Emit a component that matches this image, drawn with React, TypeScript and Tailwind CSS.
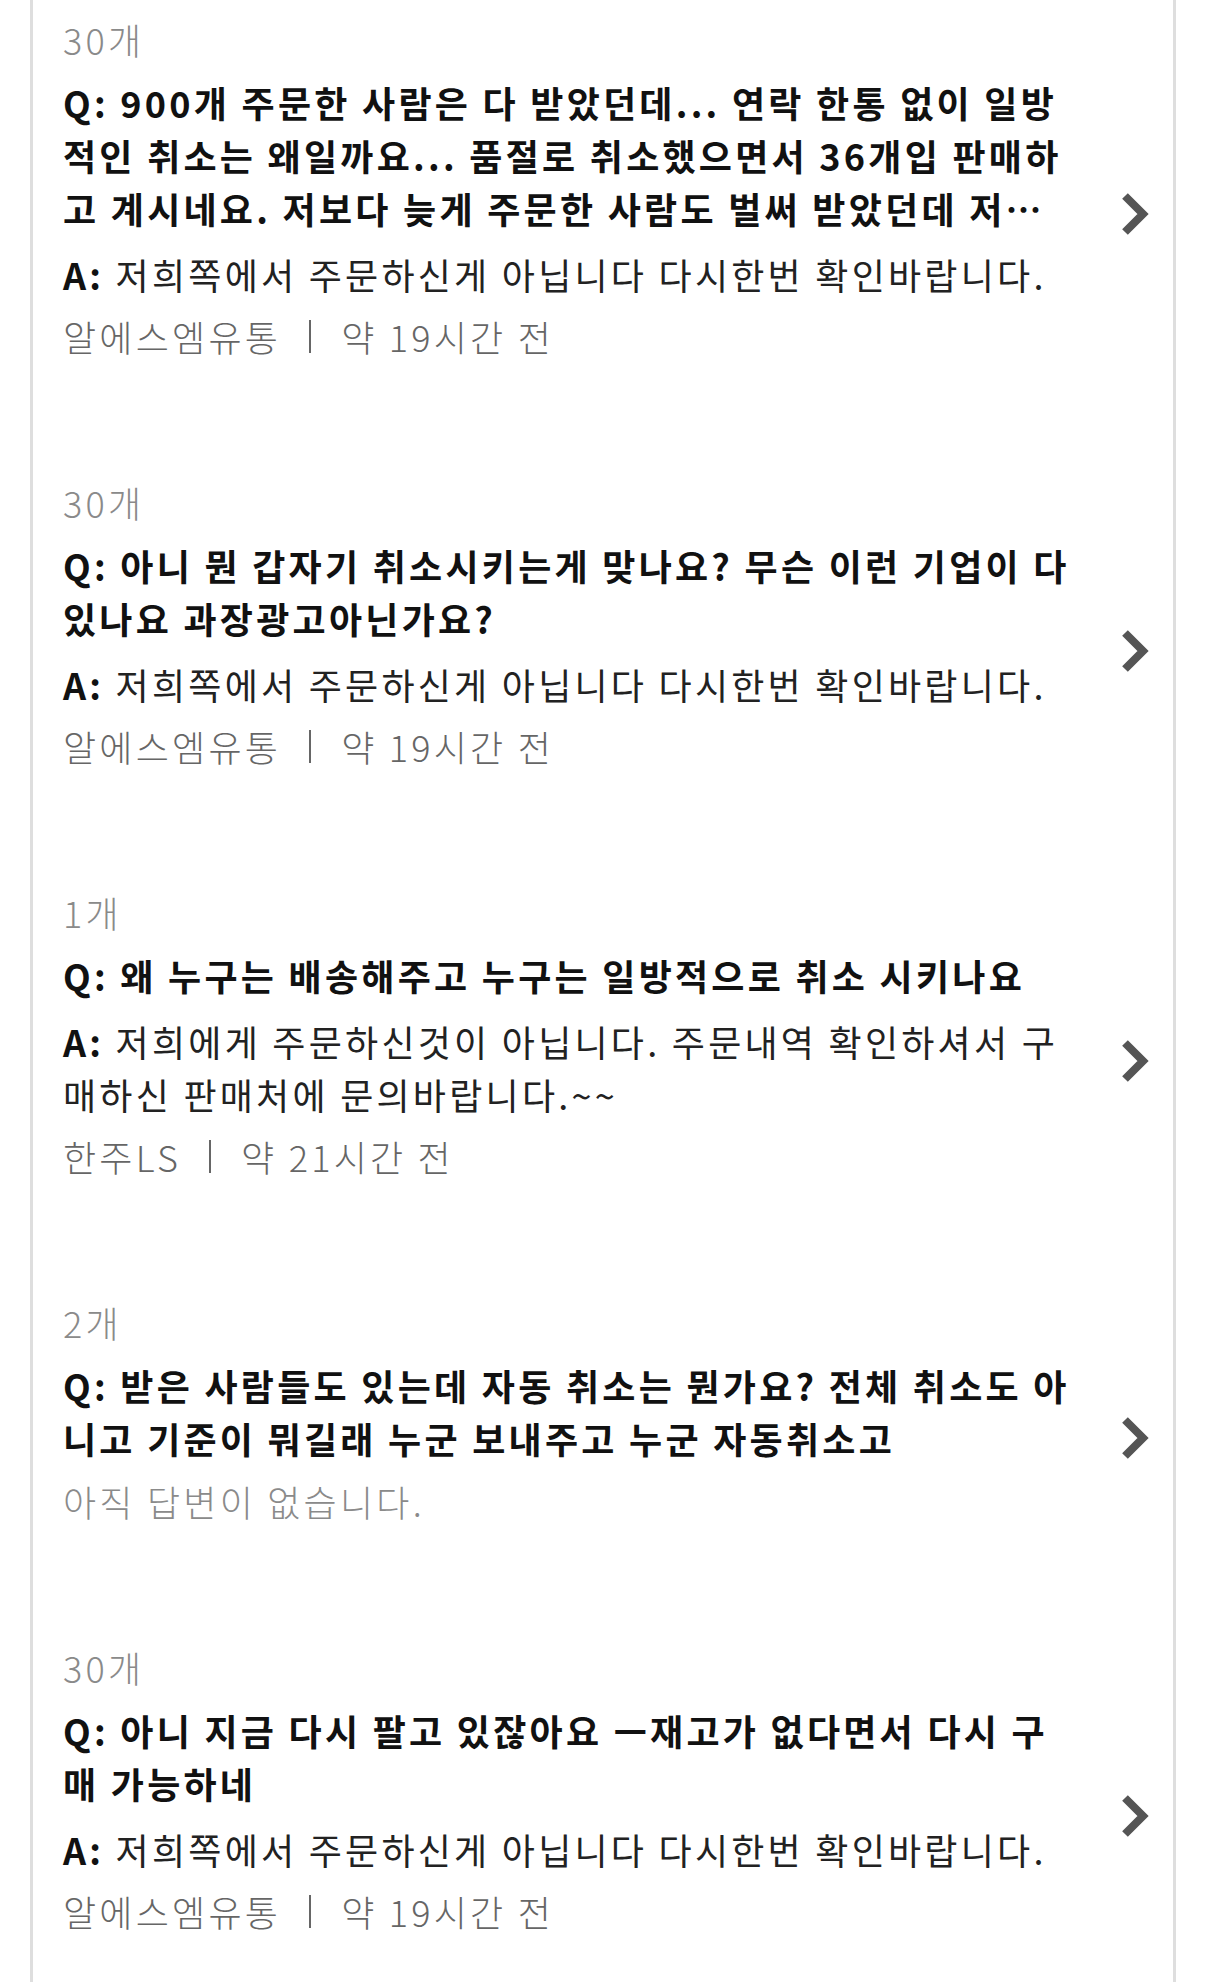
import React from "react";

type Qna = {
  count: string;
  question: string;
  answer?: string;
  seller?: string;
  time?: string;
  clamp?: boolean;
};

const items: Qna[] = [
  {
    count: "30개",
    question:
      "900개 주문한 사람은 다 받았던데... 연락 한통 없이 일방적인 취소는 왜일까요... 품절로 취소했으면서 36개입 판매하고 계시네요. 저보다 늦게 주문한 사람도 벌써 받았던데 저는 왜 취소된건가요?",
    answer: "저희쪽에서 주문하신게 아닙니다 다시한번 확인바랍니다.",
    seller: "알에스엠유통",
    time: "약 19시간 전",
    clamp: true,
  },
  {
    count: "30개",
    question: "아니 뭔 갑자기 취소시키는게 맞나요? 무슨 이런 기업이 다 있나요 과장광고아닌가요?",
    answer: "저희쪽에서 주문하신게 아닙니다 다시한번 확인바랍니다.",
    seller: "알에스엠유통",
    time: "약 19시간 전",
  },
  {
    count: "1개",
    question: "왜 누구는 배송해주고 누구는 일방적으로 취소 시키나요",
    answer: "저희에게 주문하신것이 아닙니다. 주문내역 확인하셔서 구매하신 판매처에 문의바랍니다.~~",
    seller: "한주LS",
    time: "약 21시간 전",
  },
  {
    count: "2개",
    question:
      "받은 사람들도 있는데 자동 취소는 뭔가요? 전체 취소도 아니고 기준이 뭐길래 누군 보내주고 누군 자동취소고",
  },
  {
    count: "30개",
    question: "아니 지금 다시 팔고 있잖아요 ㅡ재고가 없다면서 다시 구매 가능하네",
    answer: "저희쪽에서 주문하신게 아닙니다 다시한번 확인바랍니다.",
    seller: "알에스엠유통",
    time: "약 19시간 전",
  },
];

const Chevron = () => (
  <svg width="28" height="44" viewBox="0 0 28 44" fill="none" className="shrink-0">
    <polyline points="4,4 22,22 4,40" stroke="#555555" strokeWidth="8" strokeLinejoin="miter" />
  </svg>
);

const QnaRow = ({ item }: { item: Qna }) => (
  <div className="flex items-center">
    {/* bottom padding sits inside the text column so the arrow centres a bit low */}
    <div className="w-[1012px] pb-[52px] text-[36px] leading-[53px] tracking-[0.09em]">
      <p className="font-light text-[#8a8a8a]">{item.count}</p>
      <p className={`mt-[10px] font-bold text-[#111111] ${item.clamp ? "line-clamp-3" : ""}`}>
        Q: {item.question}
      </p>
      {item.answer ? (
        <>
          <p className="mt-[13px] text-[#222222]">
            <span className="font-bold text-[#111111]">A:</span> {item.answer}
          </p>
          <div className="mt-[9px] flex items-center font-light text-[#666666]">
            <span>{item.seller}</span>
            <span className="ml-[28px] mr-[30px] h-[33px] w-[2px] bg-[#666666]" />
            <span>{item.time}</span>
          </div>
        </>
      ) : (
        <p className="mt-[10px] font-light text-[#8a8a8a]">아직 답변이 없습니다.</p>
      )}
    </div>
    <div className="ml-auto">
      <Chevron />
    </div>
  </div>
);

export default function App() {
  return (
    <div className="h-[1982px] overflow-hidden bg-white font-['Noto_Sans_CJK_KR',sans-serif]">
      <div className="ml-[30px] h-full w-[1146px] border-x-[3px] border-[#dedede] pl-[30px] pr-[24px] pt-[13px]">
        <div className="flex flex-col gap-[61px]">
          {items.map((item, i) => (
            <QnaRow key={i} item={item} />
          ))}
        </div>
      </div>
    </div>
  );
}
